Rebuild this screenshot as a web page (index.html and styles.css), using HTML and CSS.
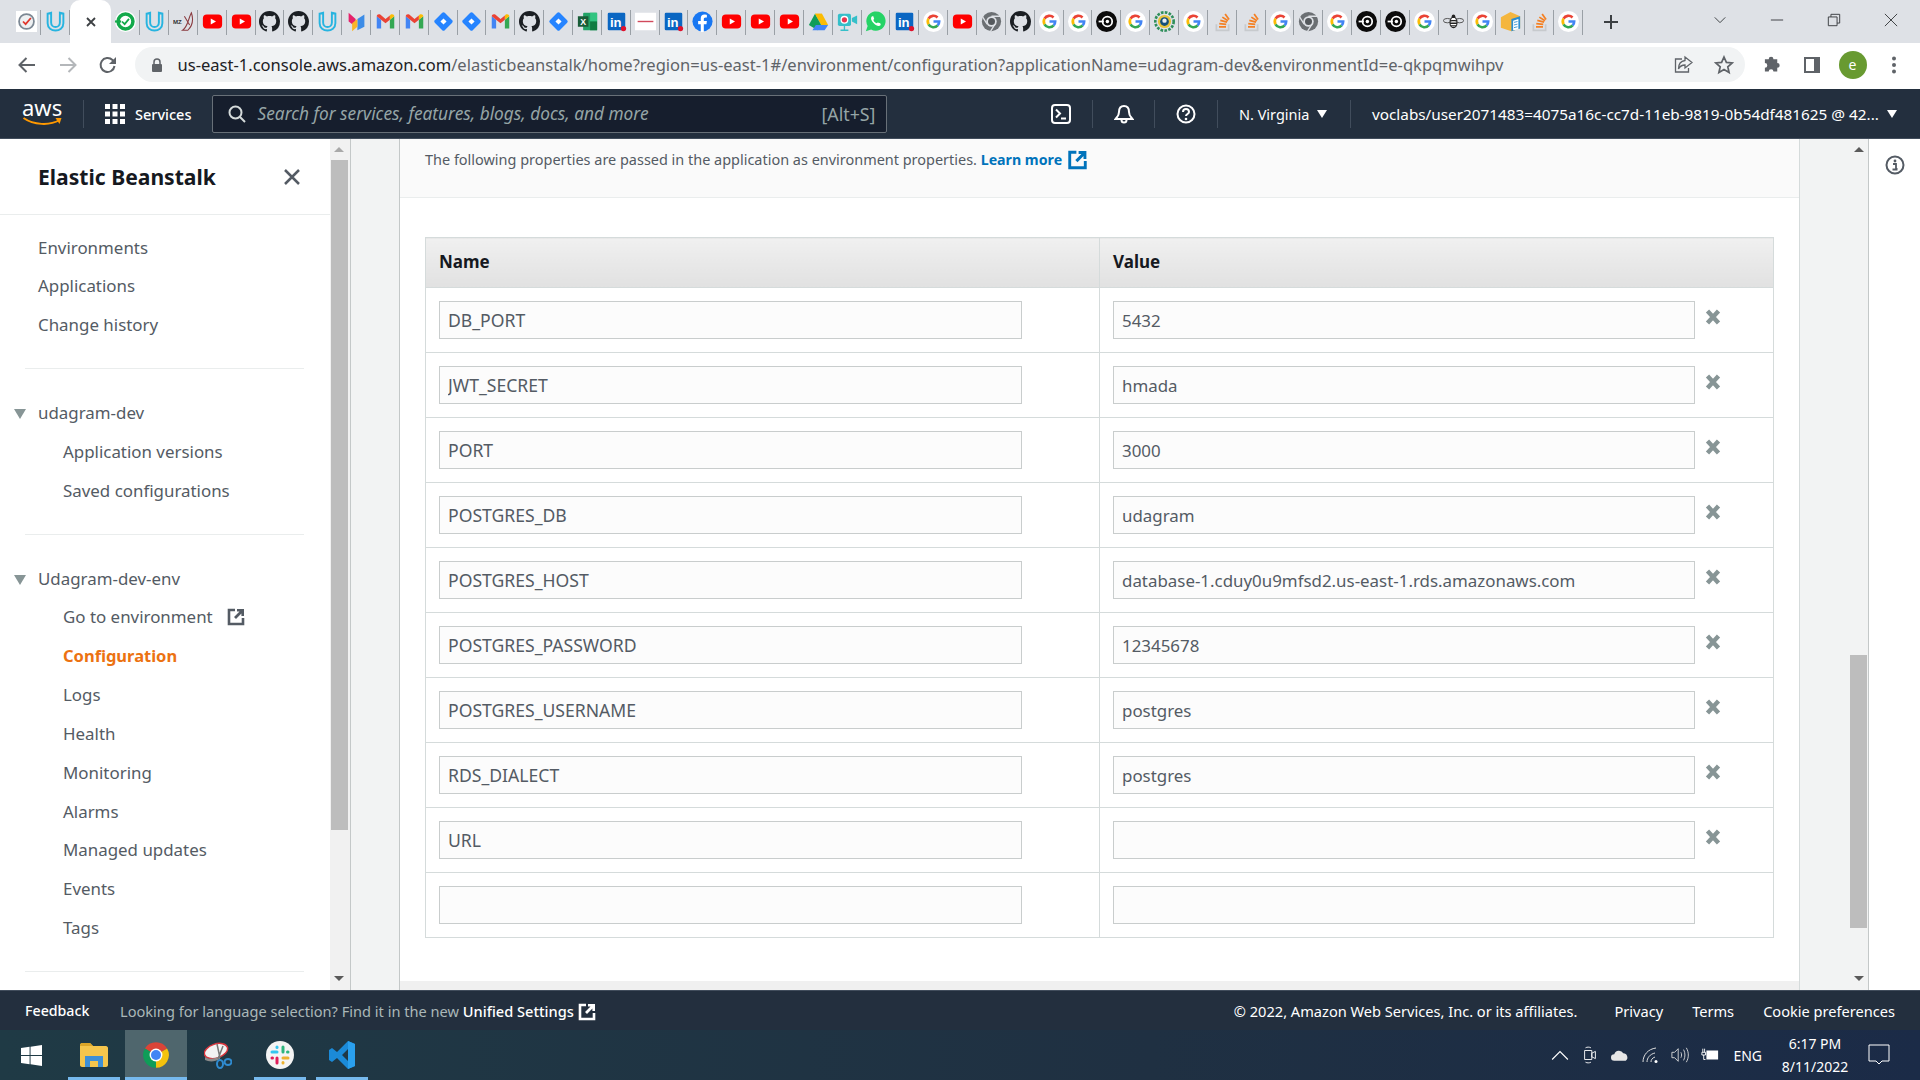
FILE: index.html
```html
<!DOCTYPE html>
<html lang="en">
<head>
    <meta charset="UTF-8">
    <meta name="viewport" content="width=device-width, initial-scale=1.0">
    <title>Elastic Beanstalk</title>
    <link rel="stylesheet" href="styles.css">
</head>
<body>

<!-- favicon and icon symbols -->
<svg class="defs" xmlns="http://www.w3.org/2000/svg">
    <symbol id="clock" viewBox="0 0 24 24"><rect width="24" height="24" fill="#fff"/><circle cx="12" cy="12" r="8.5" fill="#eef0f2" stroke="#7c8894" stroke-width="2"/><path d="M8 12l3 3 6-7" fill="none" stroke="#e0362c" stroke-width="2"/></symbol>
    <symbol id="ud" viewBox="0 0 24 24"><path d="M3 3l4-1v11c0 7 10 7 10 0V2l4 1v11c0 11-18 11-18 0z" fill="none" stroke="#27b4e0" stroke-width="2.2"/></symbol>
    <symbol id="ring" viewBox="0 0 24 24"><circle cx="12" cy="12" r="12" fill="#fff"/><circle cx="12" cy="12" r="8.5" fill="none" stroke="#13a94b" stroke-width="4"/><path d="M8 12l3 3 5-6" fill="none" stroke="#13a94b" stroke-width="2"/><path d="M0 12h7" stroke="#13a94b" stroke-width="2.5"/></symbol>
    <symbol id="mz" viewBox="0 0 24 24"><text x="0" y="15" font-size="7" font-weight="700" font-family="Liberation Sans" fill="#333">MZ</text><path d="M11 22c6-4 6-12 10-20 2 6 2 14-4 20zM13 6l6 10" fill="none" stroke="#8a3b40" stroke-width="1.2"/></symbol>
    <symbol id="yt" viewBox="0 0 24 24"><rect x="1" y="4" width="22" height="16" rx="4.5" fill="#f00"/><path d="M10 8.5v7l6-3.5z" fill="#fff"/></symbol>
    <symbol id="gh" viewBox="0 0 16 16"><path fill="#1b1f23" d="M8 0C3.58 0 0 3.58 0 8c0 3.54 2.29 6.53 5.47 7.59.4.07.55-.17.55-.38 0-.19-.01-.82-.01-1.49-2.01.37-2.53-.49-2.69-.94-.09-.23-.48-.94-.82-1.13-.28-.15-.68-.52-.01-.53.63-.01 1.08.58 1.23.82.72 1.21 1.87.87 2.33.66.07-.52.28-.87.51-1.07-1.78-.2-3.64-.89-3.64-3.95 0-.87.31-1.59.82-2.15-.08-.2-.36-1.02.08-2.12 0 0 .67-.21 2.2.82.64-.18 1.32-.27 2-.27.68 0 1.36.09 2 .27 1.53-1.04 2.2-.82 2.2-.82.44 1.1.16 1.92.08 2.12.51.56.82 1.27.82 2.15 0 3.07-1.87 3.75-3.65 3.95.29.25.54.73.54 1.48 0 1.07-.01 1.93-.01 2.2 0 .21.15.46.55.38A8.013 8.013 0 0016 8c0-4.42-3.58-8-8-8z"/></symbol>
    <symbol id="multi" viewBox="0 0 24 24"><path d="M3 2l8 7v9L3 12z" fill="#e5226b"/><path d="M13 9l8-5v14l-8 4z" fill="#3c8ce7"/><path d="M7 14l6-5v9l-6 5z" fill="#f9b529"/></symbol>
    <symbol id="gm" viewBox="0 0 24 24"><path d="M2 20V6l5 4v10z" fill="#4285f4"/><path d="M22 20V6l-5 4v10z" fill="#34a853"/><path d="M2 6c0-2 2-3 4-2l6 5 5-4v5l-5 4-10-8z" fill="#ea4335"/><path d="M17 5l1-1c2-1 4 0 4 2l-5 4z" fill="#fbbc04"/></symbol>
    <symbol id="jira" viewBox="0 0 24 24"><rect x="4" y="4" width="16" height="16" rx="2" fill="#2684ff" transform="rotate(45 12 12)"/><rect x="9.5" y="9.5" width="5" height="5" fill="#fff" transform="rotate(45 12 12)"/></symbol>
    <symbol id="xl" viewBox="0 0 24 24"><rect x="7" y="2" width="16" height="20" rx="1" fill="#21a366"/><rect x="15" y="2" width="8" height="10" fill="#33c481"/><rect x="15" y="12" width="8" height="10" fill="#107c41"/><rect x="1" y="6" width="12" height="12" fill="#185c37"/><text x="3.6" y="15.5" font-size="10" font-weight="700" font-family="Liberation Sans" fill="#fff">X</text></symbol>
    <symbol id="in" viewBox="0 0 24 24"><rect x="2" y="2" width="20" height="20" rx="1.5" fill="#0a66c2"/><text x="4.5" y="18" font-size="15" font-weight="700" font-family="Liberation Sans" fill="#fff">in</text><circle cx="20" cy="20" r="3" fill="#e0112b"/></symbol>
    <symbol id="red" viewBox="0 0 24 24"><rect y="2" width="24" height="20" fill="#fff"/><path d="M3 12h18" stroke="#d1495b" stroke-width="1.6"/></symbol>
    <symbol id="fb" viewBox="0 0 24 24"><circle cx="12" cy="12" r="11.5" fill="#1877f2"/><path d="M13.5 24v-9h3l.5-3.5h-3.500V9.500c0-1 .5-2 2-2H17V4.500S15.500 4 14.200 4C11.500 4 10 5.700 10 8.600v2.900H7V15h3v9z" fill="#fff"/></symbol>
    <symbol id="drive" viewBox="0 0 24 24"><path d="M8 3h8l7 13h-8z" fill="#fbbc04"/><path d="M8 3l7 13-4 6L1 16z" fill="#0f9d58"/><path d="M5 22l4-6h14l-4 6z" fill="#4285f4"/><path d="M8 3h8l-4 7z" fill="#fbbc04"/></symbol>
    <symbol id="cam" viewBox="0 0 24 24"><rect x="1" y="3" width="15" height="14" rx="2" fill="#35bfc9"/><path d="M17 8l6-3v10l-6-3z" fill="#35bfc9"/><circle cx="8.500" cy="10" r="4.500" fill="#fff"/><circle cx="8.500" cy="10" r="3" fill="#e8344e"/><path d="M8.500 17v4M4 22h9" stroke="#35bfc9" stroke-width="1.500"/></symbol>
    <symbol id="wa" viewBox="0 0 24 24"><path d="M1 23l2-6a11 11 0 1 1 4 4z" fill="#25d366"/><path d="M8 6c-2 2-1 5 2 8s6 4 8 2l-.5-2-3-1-1 1c-2-.5-3.500-2-4-4l1-1-1-3z" fill="#fff"/></symbol>
    <symbol id="g" viewBox="0 0 24 24"><circle cx="12" cy="12" r="12" fill="#fff"/><g fill="none" stroke-width="3"><path d="M16.600 7.400A6.500 6.500 0 0 0 6.300 8.800" stroke="#ea4335"/><path d="M6.300 8.800A6.500 6.500 0 0 0 6.300 15.200" stroke="#fbbc05"/><path d="M6.300 15.200A6.500 6.500 0 0 0 16.800 16.400" stroke="#34a853"/><path d="M16.800 16.400A6.500 6.500 0 0 0 18.500 12H12" stroke="#4285f4"/></g></symbol>
    <symbol id="cg" viewBox="0 0 24 24"><circle cx="12" cy="12" r="11" fill="#6b6f73"/><circle cx="12" cy="12" r="6" fill="#dee1e6"/><circle cx="12" cy="12" r="4" fill="#55595d"/><path d="M12 6h10M7 15L2 7M16 15l-5 8" stroke="#dee1e6" stroke-width="1.500"/></symbol>
    <symbol id="ci" viewBox="0 0 24 24"><circle cx="12" cy="12" r="12" fill="#0b0b0b"/><circle cx="13" cy="12" r="5.500" fill="none" stroke="#fff" stroke-width="2"/><circle cx="13" cy="12" r="2" fill="#fff"/><path d="M3 12h6" stroke="#fff" stroke-width="2"/></symbol>
    <symbol id="gear" viewBox="0 0 24 24"><circle cx="12" cy="12" r="10.500" fill="none" stroke="#2f8f5b" stroke-width="3" stroke-dasharray="3 1.500"/><circle cx="12" cy="12" r="7.500" fill="#e8c33a"/><circle cx="12" cy="12" r="5" fill="#15507a"/><circle cx="12" cy="11" r="2.500" fill="#e9eef2"/></symbol>
    <symbol id="so" viewBox="0 0 24 24"><path d="M5 15v7h14v-7" fill="none" stroke="#c7cacd" stroke-width="2"/><path d="M8 18h8M8.300 14.500l8 .8M9.500 10.800l7.700 2M11.800 7l6.500 4.200M15 3.500l4.500 6.300" stroke="#f48024" stroke-width="2"/></symbol>
    <symbol id="bee" viewBox="0 0 24 24"><ellipse cx="12" cy="13" rx="4" ry="6" fill="#fff" stroke="#222" stroke-width="1.300"/><path d="M8 11h8M8 14h8M9 17h6" stroke="#222" stroke-width="1.500"/><ellipse cx="5" cy="11" rx="4.500" ry="2.500" fill="none" stroke="#444"/><ellipse cx="19" cy="11" rx="4.500" ry="2.500" fill="none" stroke="#444"/><circle cx="12" cy="6" r="2" fill="#222"/></symbol>
    <symbol id="box" viewBox="0 0 24 24"><path d="M1 7l11-6 11 5v14l-10 3-12-4z" fill="#f4b63e"/><path d="M13 9l10-3v14l-10 3z" fill="#2b8ed1"/><path d="M15 11l6-2v12l-6 1z" fill="#fff"/><path d="M16 13l4-1M16 16l4-1M16 19l4-1" stroke="#2b8ed1"/></symbol>
    <symbol id="ext" viewBox="0 0 18 18"><path d="M8 2H2v14h14v-6" fill="none" stroke="currentColor" stroke-width="2.600"/><path d="M10 1h7v7h-2.600V5.500L9 11 7 9l5.500-5.400H10z" fill="currentColor"/></symbol>
    <symbol id="del" viewBox="0 0 16 16"><path d="M2.500 2l11 12M13.500 2l-11 12" stroke="#879596" stroke-width="4.400"/></symbol>
</svg>

<div class="tabstrip">
    <span class="tab"><svg class="fav"><use href="#clock"/></svg></span>
    <span class="tab"><svg class="fav"><use href="#ud"/></svg></span>
    <span class="tab tab-active"><svg class="tab-close" viewBox="0 0 12 12"><path d="M2 2l8 8M10 2l-8 8"/></svg></span>
    <span class="tab"><svg class="fav"><use href="#ring"/></svg></span>
    <span class="tab"><svg class="fav"><use href="#ud"/></svg></span>
    <span class="tab"><svg class="fav"><use href="#mz"/></svg></span>
    <span class="tab"><svg class="fav"><use href="#yt"/></svg></span>
    <span class="tab"><svg class="fav"><use href="#yt"/></svg></span>
    <span class="tab"><svg class="fav"><use href="#gh"/></svg></span>
    <span class="tab"><svg class="fav"><use href="#gh"/></svg></span>
    <span class="tab"><svg class="fav"><use href="#ud"/></svg></span>
    <span class="tab"><svg class="fav"><use href="#multi"/></svg></span>
    <span class="tab"><svg class="fav"><use href="#gm"/></svg></span>
    <span class="tab"><svg class="fav"><use href="#gm"/></svg></span>
    <span class="tab"><svg class="fav"><use href="#jira"/></svg></span>
    <span class="tab"><svg class="fav"><use href="#jira"/></svg></span>
    <span class="tab"><svg class="fav"><use href="#gm"/></svg></span>
    <span class="tab"><svg class="fav"><use href="#gh"/></svg></span>
    <span class="tab"><svg class="fav"><use href="#jira"/></svg></span>
    <span class="tab"><svg class="fav"><use href="#xl"/></svg></span>
    <span class="tab"><svg class="fav"><use href="#in"/></svg></span>
    <span class="tab"><svg class="fav"><use href="#red"/></svg></span>
    <span class="tab"><svg class="fav"><use href="#in"/></svg></span>
    <span class="tab"><svg class="fav"><use href="#fb"/></svg></span>
    <span class="tab"><svg class="fav"><use href="#yt"/></svg></span>
    <span class="tab"><svg class="fav"><use href="#yt"/></svg></span>
    <span class="tab"><svg class="fav"><use href="#yt"/></svg></span>
    <span class="tab"><svg class="fav"><use href="#drive"/></svg></span>
    <span class="tab"><svg class="fav"><use href="#cam"/></svg></span>
    <span class="tab"><svg class="fav"><use href="#wa"/></svg></span>
    <span class="tab"><svg class="fav"><use href="#in"/></svg></span>
    <span class="tab"><svg class="fav"><use href="#g"/></svg></span>
    <span class="tab"><svg class="fav"><use href="#yt"/></svg></span>
    <span class="tab"><svg class="fav"><use href="#cg"/></svg></span>
    <span class="tab"><svg class="fav"><use href="#gh"/></svg></span>
    <span class="tab"><svg class="fav"><use href="#g"/></svg></span>
    <span class="tab"><svg class="fav"><use href="#g"/></svg></span>
    <span class="tab"><svg class="fav"><use href="#ci"/></svg></span>
    <span class="tab"><svg class="fav"><use href="#g"/></svg></span>
    <span class="tab"><svg class="fav"><use href="#gear"/></svg></span>
    <span class="tab"><svg class="fav"><use href="#g"/></svg></span>
    <span class="tab"><svg class="fav"><use href="#so"/></svg></span>
    <span class="tab"><svg class="fav"><use href="#so"/></svg></span>
    <span class="tab"><svg class="fav"><use href="#g"/></svg></span>
    <span class="tab"><svg class="fav"><use href="#cg"/></svg></span>
    <span class="tab"><svg class="fav"><use href="#g"/></svg></span>
    <span class="tab"><svg class="fav"><use href="#ci"/></svg></span>
    <span class="tab"><svg class="fav"><use href="#ci"/></svg></span>
    <span class="tab"><svg class="fav"><use href="#g"/></svg></span>
    <span class="tab"><svg class="fav"><use href="#bee"/></svg></span>
    <span class="tab"><svg class="fav"><use href="#g"/></svg></span>
    <span class="tab"><svg class="fav"><use href="#box"/></svg></span>
    <span class="tab"><svg class="fav"><use href="#so"/></svg></span>
    <span class="tab"><svg class="fav"><use href="#g"/></svg></span>
    <svg class="new-tab" viewBox="0 0 16 16"><path d="M8 1v14M1 8h14"/></svg>
    <div class="window-btns">
        <svg viewBox="0 0 16 16"><path d="M2 5l6 6 6-6"/></svg>
        <svg viewBox="0 0 16 16"><path d="M1 8h14"/></svg>
        <svg viewBox="0 0 16 16"><path d="M1.500 4.500h10v10h-10zM4.500 4.500v-3h10v10h-3"/></svg>
        <svg viewBox="0 0 16 16"><path d="M1 1l14 14M15 1L1 15"/></svg>
    </div>
</div>

<div class="toolbar">
    <svg class="tool-icon" viewBox="0 0 20 20"><path d="M18 10H3M9.500 3L2.500 10l7 7" fill="none" stroke="#5f6368" stroke-width="2"/></svg>
    <svg class="tool-icon" viewBox="0 0 20 20"><path d="M2 10h15M10.500 3l7 7-7 7" fill="none" stroke="#b4b7ba" stroke-width="2"/></svg>
    <svg class="tool-icon" viewBox="0 0 20 20"><path d="M16.500 11a7 7 0 1 1-2-6L17 7.500" fill="none" stroke="#5f6368" stroke-width="2"/><path d="M18 2v7h-7z" fill="#5f6368"/></svg>
    <div class="omnibox">
        <svg class="lock" viewBox="0 0 12 16"><path d="M3 7V5a3 3 0 0 1 6 0v2" fill="none" stroke="#5f6368" stroke-width="1.500"/><rect x="1" y="7" width="10" height="8" rx="1" fill="#5f6368"/></svg>
        <span class="url"><b>us-east-1.console.aws.amazon.com</b>/elasticbeanstalk/home?region=us-east-1#/environment/configuration?applicationName=udagram-dev&amp;environmentId=e-qkpqmwihpv</span>
        <svg class="omni-icon" viewBox="0 0 20 20"><path d="M9 4H2.500v13h13v-4" fill="none" stroke="#5f6368" stroke-width="1.300"/><path d="M12 2l7 5.500L12 13v-3c-3 0-5 1-6.500 4 0-5 2.500-8 6.500-8.500z" fill="none" stroke="#5f6368" stroke-width="1.300"/></svg>
        <svg class="omni-icon" viewBox="0 0 20 20"><path d="M10 2l2.400 5.400 5.800.6-4.400 3.800 1.300 5.800L10 14.600l-5.100 3 1.300-5.800L1.800 8l5.800-.6z" fill="none" stroke="#5f6368" stroke-width="1.700"/></svg>
    </div>
    <div class="tool-right">
        <svg viewBox="0 0 20 20"><path d="M2 6h4a2.500 2.500 0 0 1 5 0h4v4a2.500 2.500 0 0 1 0 5v4h-4a2.500 2.500 0 0 0-5 0H2v-4a2.500 2.500 0 0 0 0-5z" fill="#5f6368" transform="translate(1 -1.500) scale(.95)"/></svg>
        <svg viewBox="0 0 20 20"><path d="M2 2h16v16H2z" fill="#5f6368"/><path d="M4 4h8v12H4z" fill="#fff"/></svg>
        <span class="avatar">e</span>
        <svg viewBox="0 0 20 20"><circle cx="10" cy="3.500" r="2" fill="#5f6368"/><circle cx="10" cy="10" r="2" fill="#5f6368"/><circle cx="10" cy="16.500" r="2" fill="#5f6368"/></svg>
    </div>
</div>

<nav class="awsnav">
    <div class="aws-logo">
        <span>aws</span>
        <svg viewBox="0 0 40 10"><path d="M1 1c10 7 26 8 36 2" fill="none" stroke="#f90" stroke-width="2"/><path d="M33 1l6 0-2 6z" fill="#f90"/></svg>
    </div>
    <div class="services">
        <svg viewBox="0 0 20 20"><path d="M0 0h5v5H0zM7.500 0h5v5h-5zM15 0h5v5h-5zM0 7.500h5v5H0zM7.500 7.500h5v5h-5zM15 7.500h5v5h-5zM0 15h5v5H0zM7.500 15h5v5h-5zM15 15h5v5h-5z" fill="#fff"/></svg>
        <span>Services</span>
    </div>
    <div class="searchbox">
        <svg viewBox="0 0 18 18"><circle cx="7.500" cy="7.500" r="6" fill="none" stroke="#d5dbdb" stroke-width="2"/><path d="M12 12l5 5" stroke="#d5dbdb" stroke-width="2"/></svg>
        <span class="placeholder">Search for services, features, blogs, docs, and more</span>
        <span class="shortcut">[Alt+S]</span>
    </div>
    <div class="nav-icons">
        <span class="nav-icon"><svg viewBox="0 0 20 20"><rect x="1" y="1" width="18" height="18" rx="3" fill="none" stroke="#fff" stroke-width="2"/><path d="M5 5.500l4 4-4 4M10 14.500h5" fill="none" stroke="#fff" stroke-width="2"/></svg></span>
        <span class="nav-icon"><svg viewBox="0 0 20 20"><path d="M10 2c-4 0-5 3-5 6 0 4-2 5-3.500 7h17C17 13 15 12 15 8c0-3-1-6-5-6z" fill="none" stroke="#fff" stroke-width="2"/><path d="M7.500 16a2.500 2.500 0 0 0 5 0" fill="none" stroke="#fff" stroke-width="2"/></svg></span>
        <span class="nav-icon"><svg viewBox="0 0 20 20"><circle cx="10" cy="10" r="8.500" fill="none" stroke="#fff" stroke-width="2"/><path d="M7 8c0-4 6-4 6 0 0 2-3 2-3 4" fill="none" stroke="#fff" stroke-width="2"/><circle cx="10" cy="15" r="1.300" fill="#fff"/></svg></span>
    </div>
    <div class="nav-menu nav-region">N. Virginia<i class="caret"></i></div>
    <div class="nav-menu nav-user">voclabs/user2071483=4075a16c-cc7d-11eb-9819-0b54df481625 @ 42...<i class="caret"></i></div>
</nav>

<div class="workspace">
    <aside class="sidebar">
        <div class="side-head">
            <h3>Elastic Beanstalk</h3>
            <svg viewBox="0 0 18 18"><path d="M2 2l14 14M16 2L2 16" stroke="#545b64" stroke-width="2.500"/></svg>
        </div>
        <ul class="side-list top">
            <li>Environments</li>
            <li>Applications</li>
            <li>Change history</li>
        </ul>
        <ul class="side-list">
            <li class="group">udagram-dev</li>
            <li class="sub">Application versions</li>
            <li class="sub">Saved configurations</li>
        </ul>
        <ul class="side-list">
            <li class="group">Udagram-dev-env</li>
            <li class="sub">Go to environment <svg class="side-ext"><use href="#ext"/></svg></li>
            <li class="sub active">Configuration</li>
            <li class="sub">Logs</li>
            <li class="sub">Health</li>
            <li class="sub">Monitoring</li>
            <li class="sub">Alarms</li>
            <li class="sub">Managed updates</li>
            <li class="sub">Events</li>
            <li class="sub">Tags</li>
        </ul>
    </aside>
    <div class="side-scroll">
        <i class="arrow-up"></i>
        <div class="side-thumb"></div>
        <i class="arrow-down"></i>
    </div>
    <div class="gutter"></div>

    <main class="panel">
        <section class="panel-head">
            <h2>Environment properties</h2>
            <p>The following properties are passed in the application as environment properties. <a href="#">Learn more <svg class="link-ext"><use href="#ext"/></svg></a></p>
        </section>
        <div class="table-wrap">
            <table class="props">
                <thead>
                    <tr><th>Name</th><th>Value</th></tr>
                </thead>
                <tbody>
                    <tr><td><input value="DB_PORT"></td><td><div class="val"><input value="5432"><svg class="del"><use href="#del"/></svg></div></td></tr>
                    <tr><td><input value="JWT_SECRET"></td><td><div class="val"><input value="hmada"><svg class="del"><use href="#del"/></svg></div></td></tr>
                    <tr><td><input value="PORT"></td><td><div class="val"><input value="3000"><svg class="del"><use href="#del"/></svg></div></td></tr>
                    <tr><td><input value="POSTGRES_DB"></td><td><div class="val"><input value="udagram"><svg class="del"><use href="#del"/></svg></div></td></tr>
                    <tr><td><input value="POSTGRES_HOST"></td><td><div class="val"><input value="database-1.cduy0u9mfsd2.us-east-1.rds.amazonaws.com"><svg class="del"><use href="#del"/></svg></div></td></tr>
                    <tr><td><input value="POSTGRES_PASSWORD"></td><td><div class="val"><input value="12345678"><svg class="del"><use href="#del"/></svg></div></td></tr>
                    <tr><td><input value="POSTGRES_USERNAME"></td><td><div class="val"><input value="postgres"><svg class="del"><use href="#del"/></svg></div></td></tr>
                    <tr><td><input value="RDS_DIALECT"></td><td><div class="val"><input value="postgres"><svg class="del"><use href="#del"/></svg></div></td></tr>
                    <tr><td><input value="URL"></td><td><div class="val"><input value=""><svg class="del"><use href="#del"/></svg></div></td></tr>
                    <tr><td><input value=""></td><td><div class="val"><input value=""></div></td></tr>
                </tbody>
            </table>
        </div>
        <div class="hscroll"></div>
    </main>

    <div class="main-scroll">
        <i class="arrow-up"></i>
        <div class="main-thumb"></div>
        <i class="arrow-down"></i>
    </div>
    <div class="tools-rail">
        <svg viewBox="0 0 20 20"><circle cx="10" cy="10" r="8.500" fill="none" stroke="#545b64" stroke-width="2"/><circle cx="10" cy="6" r="1.400" fill="#545b64"/><path d="M8 9h3v5h1.500M7.500 14.500h5" fill="none" stroke="#545b64" stroke-width="1.800"/></svg>
    </div>
</div>

<footer class="footer">
    <span class="feedback">Feedback</span>
    <span class="lang">Looking for language selection? Find it in the new <b>Unified Settings</b> <svg class="foot-ext"><use href="#ext"/></svg></span>
    <div class="foot-right">
        <span class="copy">© 2022, Amazon Web Services, Inc. or its affiliates.</span>
        <span>Privacy</span>
        <span>Terms</span>
        <span>Cookie preferences</span>
    </div>
</footer>

<div class="taskbar">
    <div class="task-start"><svg viewBox="0 0 22 22"><path d="M0 3.200l9-1.300v8.600H0zM10 1.800L22 0v10.500H10zM0 11.500h9v8.600l-9-1.300zM10 11.500h12V22l-12-1.800z" fill="#fff"/></svg></div>
    <div class="task-item open"><svg viewBox="0 0 28 24"><path d="M0 2c0-1 1-2 2-2h8l3 3h13c1 0 2 1 2 2v17c0 1-1 2-2 2H2c-1 0-2-1-2-2z" fill="#f5c54c"/><path d="M0 2c0-1 1-2 2-2h8l3 3H0z" fill="#dba528"/><path d="M5 13h18v11h-5v-6h-8v6H5z" fill="#3e8fd6"/></svg></div>
    <div class="task-item open current"><svg viewBox="0 0 24 24"><path d="M12 12L2.470 6.500A11 11 0 0 1 21.530 6.500z" fill="#db4437"/><path d="M12 12l9.530-5.500A11 11 0 0 1 12 23z" fill="#f4c20d"/><path d="M12 12v11A11 11 0 0 1 2.470 6.500z" fill="#0f9d58"/><circle cx="12" cy="12" r="5.500" fill="#fff"/><circle cx="12" cy="12" r="4.300" fill="#4285f4"/></svg></div>
    <div class="task-item"><svg viewBox="0 0 28 28"><ellipse cx="12" cy="10" rx="12" ry="7" fill="#f2f2f2" stroke="#d8343c" stroke-width="1.500" transform="rotate(-18 12 10)"/><path d="M1 16c4 3 10 2 15-1v3c-5 3-11 3-15 1z" fill="#8b8b8b"/><path d="M13 3l3 14M19 5l-5 13" stroke="#777" stroke-width="1.500"/><ellipse cx="16" cy="23" rx="3" ry="4" fill="none" stroke="#2f8bd0" stroke-width="2"/><ellipse cx="24" cy="21" rx="3.500" ry="3" fill="none" stroke="#2f8bd0" stroke-width="2"/></svg></div>
    <div class="task-item open"><svg viewBox="0 0 28 28"><circle cx="14" cy="14" r="14" fill="#f4f4f4"/><g stroke-width="3" stroke-linecap="round"><path d="M6 11h5" stroke="#36c5f0"/><path d="M11 6v.5" stroke="#36c5f0"/><path d="M17 6v5" stroke="#2eb67d"/><path d="M22 11h-.5" stroke="#2eb67d"/><path d="M22 17h-5" stroke="#ecb22e"/><path d="M17 22v-.5" stroke="#ecb22e"/><path d="M11 22v-5" stroke="#e01e5a"/><path d="M6 17h.5" stroke="#e01e5a"/></g></svg></div>
    <div class="task-item open"><svg viewBox="0 0 26 28"><path d="M19 0l7 3v22l-7 3-11-11-5 4-3-2v-10l3-2 5 4zM19 8l-6 6 6 6z" fill="#1b8ad8"/><path d="M19 0l7 3v22l-7 3z" fill="#2aa0ee"/></svg></div>
    <div class="tray">
        <svg viewBox="0 0 16 10"><path d="M1 9l7-7 7 7" fill="none" stroke="#fff"/></svg>
        <svg viewBox="0 0 16 20"><path d="M2 5h8v10H2zM10 8l4-2v8l-4-2zM3 2c2-1 4-1 6 0M3 18c2 1 4 1 6 0" fill="none" stroke="#fff"/></svg>
        <svg viewBox="0 0 22 14"><path d="M4 14a4 4 0 0 1 0-8 6 6 0 0 1 11-1 5 5 0 0 1 3 9z" fill="#e7e7e7"/></svg>
        <svg viewBox="0 0 18 18"><path d="M2 16C2 9 7 3 15 2M6 16c0-4 3-8 8-9M10 16c0-2 1-4 4-5" fill="none" stroke="#ddd"/><circle cx="15" cy="15.500" r="1.500" fill="#fff"/></svg>
        <svg viewBox="0 0 20 18"><path d="M1 6h3l4-4v14l-4-4H1zM11 6c1 2 1 4 0 6M14 3c2 4 2 8 0 12M17 1c3 5 3 11 0 16" fill="none" stroke="#ddd"/></svg>
        <svg viewBox="0 0 20 14"><path d="M2 0v4M4 0v4M1 4h4v3H1zM3 7v5h2" fill="none" stroke="#fff"/><rect x="6" y="2" width="13" height="10" fill="#fff"/></svg>
        <span class="eng">ENG</span>
        <div class="clock"><span>6:17 PM</span><span>8/11/2022</span></div>
        <svg class="notify" viewBox="0 0 22 22"><path d="M1 1h20v16h-7l-3 3-3-3H1z" fill="none" stroke="#fff"/></svg>
    </div>
</div>

</body>
</html>
```

FILE: styles.css
```css
* {
    box-sizing: border-box;
}
body {
    margin: 0;
    width: 1920px;
    height: 1080px;
    overflow: hidden;
    display: flex;
    flex-direction: column;
    font-family: 'Noto Sans', sans-serif;
    color: #545b64;
    background: #fff;
}
.defs {
    display: none;
}

/* browser chrome */
.tabstrip {
    height: 43px;
    flex: none;
    display: flex;
    align-items: center;
    padding-left: 12.5px;
    background: #dee1e6;
}
.tab {
    width: 28.86px;
    height: 43px;
    flex: none;
    display: flex;
    align-items: center;
    justify-content: center;
    position: relative;
}
.tab::after {
    content: "";
    position: absolute;
    right: 0;
    top: 10px;
    bottom: 8px;
    width: 1px;
    background: #9aa0a6;
}
.fav {
    width: 21px;
    height: 21px;
}
.tab-active {
    width: 41px;
    background: #fff;
    border-radius: 10px 10px 0 0;
}
.tab-active::after {
    display: none;
}
.tab-close {
    width: 12px;
    height: 12px;
    fill: none;
    stroke: #3c4043;
    stroke-width: 1.8;
}
.new-tab {
    width: 16px;
    height: 16px;
    margin-left: 20px;
    fill: none;
    stroke: #3c4043;
    stroke-width: 2;
}
.window-btns {
    margin-left: auto;
    display: flex;
    gap: 43px;
    padding: 0 22px 4px 0;
}
.window-btns svg {
    width: 14px;
    height: 14px;
    fill: none;
    stroke: #3c4043;
    stroke-width: 1.1;
}
.toolbar {
    height: 46px;
    flex: none;
    display: flex;
    align-items: center;
    padding: 0 0 3px 17px;
    background: #fff;
}
.tool-icon {
    width: 20px;
    height: 20px;
    margin-right: 20.5px;
}
.omnibox {
    width: 1610px;
    height: 35px;
    margin-left: -4px;
    display: flex;
    align-items: center;
    padding: 0 11px 0 16px;
    background: #f1f3f4;
    border-radius: 18px;
}
.lock {
    width: 12px;
    height: 16px;
    flex: none;
}
.url {
    flex: 1;
    margin-left: 15px;
    font-size: 16.55px;
    color: #5f6368;
    white-space: nowrap;
    overflow: hidden;
}
.url b {
    font-weight: 400;
    color: #202124;
}
.omni-icon {
    width: 20px;
    height: 20px;
    flex: none;
    margin-left: 21px;
}
.tool-right {
    display: flex;
    align-items: center;
    gap: 20px;
    margin-left: 17px;
}
.tool-right svg {
    width: 20px;
    height: 20px;
}
.avatar {
    width: 28px;
    height: 28px;
    margin: 0 -3px;
    border-radius: 50%;
    background: #689a31;
    color: #fff;
    font-size: 14px;
    display: flex;
    align-items: center;
    justify-content: center;
}

/* aws top bar */
.awsnav {
    height: 50px;
    flex: none;
    display: flex;
    align-items: center;
    background: #232f3e;
    border-bottom: 1px solid #414d5c;
    color: #fff;
    font-size: 14.5px;
}
.aws-logo {
    width: 84px;
    height: 28px;
    padding-left: 22px;
    border-right: 1px solid #414d5c;
    display: flex;
    flex-direction: column;
    line-height: 18px;
    font-size: 22px;
}
.aws-logo span {
    height: 19px;
    margin-top: -2px;
}
.aws-logo svg {
    width: 41px;
    height: 10px;
}
.services {
    display: flex;
    align-items: center;
    gap: 10px;
    margin-left: 21px;
    font-weight: 500;
}
.services svg {
    width: 20px;
    height: 20px;
}
.searchbox {
    width: 675px;
    height: 38px;
    margin-left: 21px;
    display: flex;
    align-items: center;
    padding: 0 11px 0 15px;
    background: #161e2d;
    border: 1px solid #687078;
    border-radius: 2px;
    color: #95a5a6;
    font-size: 17.3px;
}
.searchbox svg {
    width: 18px;
    height: 18px;
    flex: none;
}
.placeholder {
    margin-left: 11px;
    font-style: italic;
}
.shortcut {
    margin-left: auto;
    font-size: 17.8px;
}
.nav-icons {
    display: flex;
    margin-left: 143px;
}
.nav-icon {
    width: 62.5px;
    height: 28px;
    display: flex;
    align-items: center;
    justify-content: center;
    border-right: 1px solid #414d5c;
}
.nav-icon svg {
    width: 20px;
    height: 20px;
}
.nav-menu {
    height: 28px;
    display: flex;
    align-items: center;
    white-space: nowrap;
}
.nav-region {
    width: 133px;
    padding-left: 21px;
    border-right: 1px solid #414d5c;
}
.nav-user {
    padding-left: 21px;
    font-size: 15.3px;
}
.caret {
    width: 0;
    height: 0;
    margin-left: 8px;
    border-left: 5.5px solid transparent;
    border-right: 5.5px solid transparent;
    border-top: 8px solid #fff;
}

/* console area */
.workspace {
    flex: 1;
    min-height: 0;
    display: flex;
    overflow: hidden;
}
.sidebar {
    width: 330px;
    flex: none;
    background: #fff;
    overflow: hidden;
}
.side-head {
    height: 76px;
    display: flex;
    align-items: center;
    justify-content: space-between;
    padding: 0 29px 0 38px;
    border-bottom: 1px solid #eaeded;
}
.side-head h3 {
    margin: 0;
    font-size: 21.1px;
    font-weight: 700;
    color: #16191f;
}
.side-head svg {
    width: 18px;
    height: 18px;
}
.side-list {
    list-style: none;
    margin: 0 26px 0 25px;
    padding: 24px 0;
    border-bottom: 1px solid #eaeded;
    font-size: 16.9px;
}
.side-list li {
    height: 38.85px;
    display: flex;
    align-items: center;
    padding-left: 13px;
    white-space: nowrap;
}
.side-list.top {
    padding-top: 12.6px;
}
.side-list .sub {
    padding-left: 38px;
}
.side-list .group {
    position: relative;
}
.side-list .group::before {
    content: "";
    position: absolute;
    left: -11px;
    top: 16px;
    border-left: 6.5px solid transparent;
    border-right: 6.5px solid transparent;
    border-top: 10px solid #879596;
}
.side-list .active {
    color: #ec7211;
    font-weight: 700;
    font-size: 16.5px;
}
.side-ext {
    width: 18px;
    height: 18px;
    margin-left: 14px;
}
.side-scroll {
    width: 21px;
    flex: none;
    display: flex;
    flex-direction: column;
    align-items: center;
    background: #f1f1f1;
    border-right: 1px solid #c4c8c8;
    padding: 8px 2px 9px 0;
}
.side-thumb {
    width: 17px;
    height: 670px;
    margin-top: 8px;
    background: #bdbdbd;
}
.arrow-up,
.arrow-down {
    width: 0;
    height: 0;
    border-left: 5px solid transparent;
    border-right: 5px solid transparent;
}
.arrow-up {
    border-bottom: 5px solid #5a5a5a;
}
.arrow-down {
    margin-top: auto;
    border-top: 5px solid #5a5a5a;
}
.side-scroll .arrow-up {
    border-bottom-color: #a9a9a9;
}
.gutter {
    width: 49px;
    flex: none;
    background: #f2f3f3;
    border-right: 1px solid #c4c8c8;
}
.panel {
    width: 1399px;
    flex: none;
    display: flex;
    flex-direction: column;
    background: #fff;
}
.panel-head {
    height: 59px;
    flex: none;
    padding-left: 25px;
    background: #fafafa;
    border-bottom: 1px solid #eaeded;
}
.panel-head h2 {
    margin: -27px 0 0;
    font-size: 22px;
    line-height: 24px;
    color: #16191f;
}
.panel-head p {
    margin: 14px 0 0;
    font-size: 14.46px;
    line-height: 20px;
    white-space: nowrap;
}
.panel-head a {
    color: #0073bb;
    font-weight: 700;
    font-size: 14.2px;
    text-decoration: none;
}
.link-ext {
    width: 21px;
    height: 20px;
    vertical-align: -5px;
    margin-left: 1px;
}
.table-wrap {
    padding: 39px 26px 0 25px;
}
.props {
    width: 1349px;
    table-layout: fixed;
    border-collapse: collapse;
}
.props th,
.props td {
    border: 1px solid #d5dbdb;
    padding: 0 13px;
}
.props th:first-child,
.props td:first-child {
    width: 674px;
}
.props th {
    height: 50px;
    padding-bottom: 2px;
    text-align: left;
    font-size: 17px;
    font-weight: 700;
    color: #16191f;
    background: linear-gradient(to bottom, #f0f0f0, #e1e1e1);
}
.props td {
    height: 65px;
}
.props input {
    display: block;
    width: 583px;
    height: 38px;
    padding: 0 8px;
    background: #fcfcfc;
    border: 1px solid #c9cdcd;
    border-radius: 0;
    font-family: inherit;
    font-size: 17.6px;
    color: #545b64;
}
.val {
    display: flex;
}
.props .val input {
    width: 582px;
    flex: none;
    font-size: 16.9px;
}
.del {
    width: 16px;
    height: 16px;
    margin: 8px 0 0 10px;
}
.hscroll {
    height: 9px;
    margin-top: auto;
    background: #f0f0f0;
}
.main-scroll {
    width: 70px;
    flex: none;
    display: flex;
    flex-direction: column;
    align-items: flex-end;
    background: #f2f3f3;
    border-left: 1px solid #d5dbdb;
    border-right: 1px solid #c4c8c8;
    padding: 8px 4px 9px 0;
}
.main-scroll .main-thumb {
    width: 17px;
    height: 273px;
    margin: 503px -3px 0 0;
    background: #bdbdbd;
}
.tools-rail {
    flex: 1;
    background: #fff;
    padding: 16px 0 0 16px;
}
.tools-rail svg {
    width: 20px;
    height: 20px;
}

/* console footer */
.footer {
    height: 40px;
    flex: none;
    display: flex;
    align-items: center;
    padding: 0 25px;
    background: #232f3e;
    border-top: 1px solid #414d5c;
    color: #fff;
    font-size: 14.6px;
}
.feedback {
    width: 95px;
    font-weight: 500;
    font-size: 14.2px;
}
.lang {
    color: #aab7b8;
    white-space: nowrap;
}
.lang b {
    color: #fff;
    font-weight: 500;
}
.foot-ext {
    width: 18px;
    height: 18px;
    color: #fff;
    vertical-align: -4px;
}
.foot-right {
    margin-left: auto;
    display: flex;
    gap: 29px;
    white-space: nowrap;
}
.copy {
    margin-right: 8px;
}

/* windows taskbar */
.taskbar {
    height: 50px;
    flex: none;
    display: flex;
    align-items: stretch;
    background: linear-gradient(to right, #1f3a45, #1f3042 60%, #1b2b47);
    color: #fff;
}
.task-start {
    width: 62.5px;
    display: flex;
    align-items: center;
    justify-content: center;
}
.task-start svg {
    width: 21px;
    height: 21px;
}
.task-item {
    width: 62.2px;
    display: flex;
    align-items: center;
    justify-content: center;
    position: relative;
}
.task-item svg {
    width: 28px;
    height: 28px;
}
.task-item.open::after {
    content: "";
    position: absolute;
    left: 5px;
    right: 5px;
    bottom: 0;
    height: 3px;
    background: #76b9ed;
}
.task-item.current {
    background: #4f666d;
}
.task-item.current::after {
    left: 0;
    right: 0;
}
.tray {
    margin-left: auto;
    display: flex;
    align-items: center;
    padding-right: 30px;
    font-size: 14px;
}
.tray svg {
    width: 18px;
    height: 18px;
    margin-right: 12px;
}
.eng {
    margin-left: 2px;
}
.clock {
    width: 100px;
    margin-left: 3px;
    display: flex;
    flex-direction: column;
    align-items: center;
    gap: 3px;
    line-height: 20px;
}
.tray .notify {
    width: 22px;
    height: 22px;
    margin: 0 0 0 3px;
}
```
